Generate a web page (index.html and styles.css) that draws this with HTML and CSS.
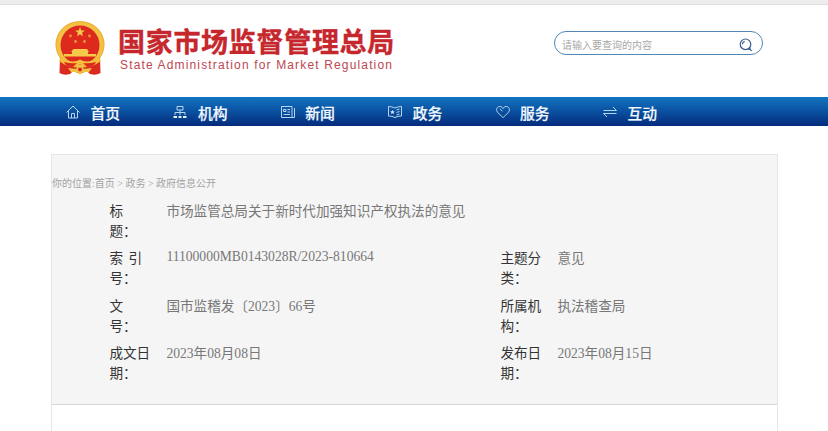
FILE: index.html
```html
<!DOCTYPE html>
<html lang="zh-CN">
<head>
<meta charset="utf-8">
<title>国家市场监督管理总局</title>
<link rel="stylesheet" href="styles.css">
</head>
<body>
<div class="topbar"></div>
<header class="header">
  <svg class="emblem" viewBox="0 0 50 54">
    <path d="M5 35L4.500 52Q9 55 15 53L18 50L25 53L32 50L35 53Q41 55 45.500 52L45 35Z" fill="#d92a20"/>
    <ellipse cx="25" cy="23.500" rx="24.600" ry="23.500" fill="#e9b02f"/>
    <ellipse cx="25" cy="23.500" rx="23.500" ry="22.500" fill="#f3c244"/>
    <circle cx="25" cy="24" r="19.500" fill="#de2a1d"/>
    <path d="M25 6l1.200 3.500 3.700.1-2.900 2.200 1 3.500-3-2-3 2 1-3.500-2.900-2.200 3.700-.1z" fill="#f6cb4b"/>
    <g fill="#e9953a"><circle cx="15.500" cy="15" r="1.400"/><circle cx="34.500" cy="15" r="1.400"/><circle cx="20.500" cy="20.500" r="1.400"/><circle cx="29.500" cy="20.500" r="1.400"/></g>
    <path d="M18.500 28H32L34 31H33V33H41V35.500H9V33H17V31H16Z" fill="#f7ca49"/>
    <path d="M7 35Q16 44 25 38.500Q34 44 43 35L46 40Q35 48 29 45L25 43L21 45Q15 48 4 40Z" fill="#f3bd3d"/>
    <path d="M9 41Q16 43 22 42L18 46Q11 46 9 41ZM41 41Q34 43 28 42L32 46Q39 46 41 41Z" fill="#d92a20"/>
    <path d="M13 47L21 48L25 44L29 48L37 47L34 51H29L25 53.500L21 51H16Z" fill="#f3c244"/>
    <circle cx="25" cy="48.500" r="2" fill="#d92a20"/>
  </svg>
  <div class="brand">
    <div class="brand-cn">国家市场监督管理总局</div>
    <div class="brand-en">State Administration for Market Regulation</div>
  </div>
  <div class="search">
    <span>请输入要查询的内容</span>
    <svg class="search-icon" viewBox="0 0 14 14"><circle cx="6.500" cy="6.300" r="5.300"/><path d="M3.400 6.300a3.100 3.100 0 0 1 2.300-2.900M9.800 10l2.800 2.800M9 11.200h3"/></svg>
  </div>
</header>
<nav class="nav">
  <a class="nav-item"><svg class="icon" viewBox="0 0 14 14"><path d="M.5 7.500L7 1l6.500 6.500M2.500 6v7h9V6M5.500 13V8.500h3V13"/></svg>首页</a>
  <a class="nav-item"><svg class="icon" viewBox="0 0 14 14"><path d="M4 1.500h6v3.500H4zM7 5v5M2 10V7.500h10V10"/><path d="M.5 12H4M5.500 12h3M10 12h3.500" class="heavy"/></svg>机构</a>
  <a class="nav-item"><svg class="icon" viewBox="0 0 14 14"><path d="M.5 1.500h10.500v11H.5zM11 12.500h2.500V3M6.500 4.500H9M6.500 7H9M2.500 9.500H9"/><path d="M2.500 4.500h2.500v2H2.500z"/></svg>新闻</a>
  <a class="nav-item"><svg class="icon" viewBox="0 0 14 14"><path d="M.5 1.500Q4 1.500 7 3Q10 1.500 13.500 1.500V11Q10 11 7 12.500Q4 11 .5 11ZM8.500 5l3-1M8.500 7.500l3-1M8.500 10l3-1"/><path class="solid" d="M4.500 5l.7 1.300 1.500.2-1.100 1 .3 1.500-1.400-.7-1.400.7.3-1.500-1.100-1 1.500-.2z"/></svg>政务</a>
  <a class="nav-item"><svg class="icon" viewBox="0 0 14 14"><path d="M7 12.700L1.500 7.200C-.5 4.500 1 1.600 3.800 1.500C5.500 1.500 6.500 2.500 7 3.500C7.500 2.500 8.500 1.500 10.200 1.500C13 1.600 14.500 4.500 12.500 7.200ZM4 3.800L6.500 6.300"/></svg>服务</a>
  <a class="nav-item"><svg class="icon" viewBox="0 0 14 14"><path d="M.5 5.500h13L10 2M13.500 8.500H.5L4 12"/></svg>互动</a>
</nav>
<main class="panel">
  <section class="info">
    <div class="crumb">你的位置:首页 &gt; 政务 &gt; 政府信息公开</div>
    <dl class="meta">
      <dt>标<br>题：</dt><dd class="wide">市场监管总局关于新时代加强知识产权执法的意见</dd>
      <dt class="spaced">索 引<br>号：</dt><dd class="code">11100000MB0143028R/2023-810664</dd>
      <dt>主题分类：</dt><dd>意见</dd>
      <dt>文<br>号：</dt><dd>国市监稽发〔2023〕66号</dd>
      <dt>所属机构：</dt><dd>执法稽查局</dd>
      <dt>成文日期：</dt><dd>2023年08月08日</dd>
      <dt>发布日期：</dt><dd>2023年08月15日</dd>
    </dl>
  </section>
</main>
</body>
</html>
```
FILE: styles.css
```css
* { box-sizing: border-box; }
body {
  margin: 0;
  height: 431px;
  overflow: hidden;
  background: #fff;
  font-family: "Liberation Serif", "Noto Sans CJK SC", sans-serif;
  display: flex;
  flex-direction: column;
}
.topbar { height: 5px; background: #ededed; border-bottom: 1px solid #dedede; flex: none; }
.header { height: 92px; flex: none; display: flex; padding-left: 55px; }
.emblem { width: 50px; height: 54px; margin-top: 16px; flex: none; }
.brand { margin: 18px 0 0 13px; width: 436px; white-space: nowrap; }
.brand-cn {
  font: 700 27px/36px "Noto Sans CJK SC", sans-serif;
  letter-spacing: 0.7px;
  color: #c6272d;
  -webkit-text-stroke: 0.4px #c6272d;
}
.brand-en {
  font: 12px/14px "Liberation Sans", sans-serif;
  letter-spacing: 1.15px;
  margin: -1px 0 0 2px;
  color: #bd4650;
}
.search {
  width: 209px;
  height: 24px;
  margin-top: 26px;
  padding: 3px 9px 0 7px;
  border: 1px solid #5087b5;
  border-radius: 12px;
  display: flex;
  align-items: center;
  justify-content: space-between;
  font: 10px/16px "Noto Sans CJK SC", sans-serif;
  color: #a9a9a9;
}
.search-icon { width: 14px; height: 14px; fill: none; stroke: #35598f; stroke-width: 1.2; }
.nav {
  height: 29px;
  flex: none;
  display: flex;
  padding-left: 66px;
  background: linear-gradient(#1275c0, #0a50a0 50%, #052b7c);
}
.nav-item {
  width: 107.4px;
  display: flex;
  align-items: center;
  gap: 10.5px;
  padding-top: 3px;
  font: 500 14.8px/26px "Noto Sans CJK SC", sans-serif;
  -webkit-text-stroke: 0.2px #f2f9ff;
  color: #f2f9ff;
}
.icon { width: 14px; height: 14px; margin-top: -3px; fill: none; stroke: #b5d5f0; stroke-width: 1; }
.icon .heavy { stroke: #e3f2ff; stroke-width: 2; }
.icon .solid { fill: #d5eaff; stroke: none; }
.panel {
  margin: 28px 50px 0 51px;
  flex: 1;
  border: 1px solid #e6e6e6;
  border-bottom: 0;
}
.info { height: 250px; background: #f5f5f5; border-bottom: 1px solid #d6d6d6; }
.crumb { padding-top: 21px; font-size: 10px; line-height: 16px; color: #a3a3a3; }
.meta {
  margin: 10px 0 0 57.4px;
  display: grid;
  grid-template-columns: 57px 334px 57px 200px;
  grid-auto-rows: 47.4px;
  font-size: 13.6px;
  line-height: 20px;
}
.meta dt { width: 44px; color: #333; }
.meta .spaced { word-spacing: 2px; }
.meta dd { margin: 0; color: #777; white-space: nowrap; }
.meta .wide { grid-column: 2 / 5; }
.meta .code { margin-top: -2px; }
```
